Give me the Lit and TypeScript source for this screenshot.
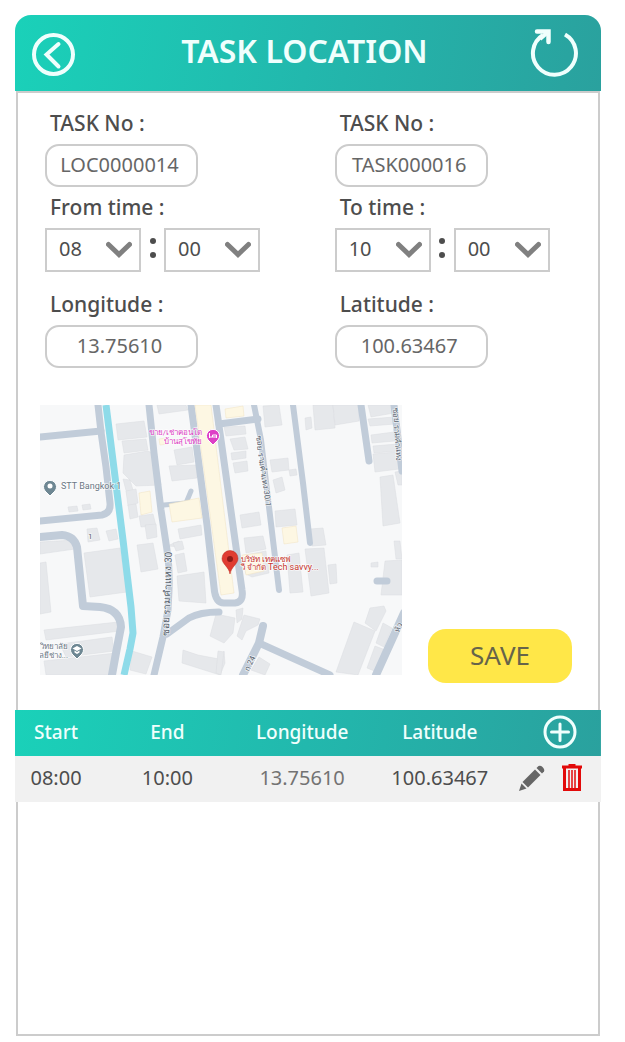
import { LitElement, html, css, svg } from "lit";
import { customElement, state } from "lit/decorators.js";

const ROADS: Array<[string, number]> = [
  ["M58 0 61 27 66 62 70 98Q71 108 62 110L0 116", 7],
  ["M0 32 61 26", 7],
  ["M0 132 22 130Q34 131 37 142L43 201 60 202Q80 204 81 222L76 248 72 270", 8],
  ["M109 0 114 48 121 105 127 145Q130 165 129 185L128 205 123 232 114 270", 7],
  ["M127 229 149 213Q160 207 179 207", 7],
  ["M124 100 146 98 151 86", 5],
  ["M151 0 167 120 174 182Q175 198 184 198L195 198Q204 197 202 185L196 142 182 42 176 0", 7],
  ["M179 19 218 14", 7],
  ["M214 0 221 35 229 102 239 185", 6],
  ["M253 0 263 78 270 138", 6],
  ["M321 0 329 56", 7],
  ["M354 0 362 66", 7],
  ["M223 221 219 238 203 270", 8],
  ["M219 238 250 252 290 270", 7],
  ["M364 208 336 270", 8],
  ["M337 176 347 176", 7],
];

const BLOCKS = [
  "76,19 104,16 107,32 78,35",
  "82,36 106,34 108,45 84,48",
  "84,50 108,46 112,48 118,62 121,80 96,81 83,68",
  "83,74 90,75 95,92 88,93",
  "86,86 96,84 98,98 88,101",
  "88,100 96,99 98,112 90,114",
  "99,111 113,109 116,121 101,122",
  "105,120 116,119 117,132 107,134",
  "28,102 37,101 38,106 29,107",
  "42,100 50,99 51,104 43,105",
  "47,124 57,123 60,135 48,137",
  "66,126 76,124 78,134 69,136",
  "117,0 146,0 148,5 119,9",
  "134,45 152,42 154,57 137,60",
  "129,61 156,60 157,73 132,76",
  "138,124 161,120 162,130 140,134",
  "139,136 143,142 127,141",
  "44,148 80,143 87,187 50,192",
  "0,158 6,157 11,207 0,209",
  "0,137 34,135 35,144 0,149",
  "97,140 113,138 118,164 101,167",
  "135,150 144,148 147,166 138,168",
  "133,138 142,136 144,144 136,146",
  "137,171 164,167 166,198 139,196",
  "4,225 78,217 80,226 6,235",
  "20,239 72,232 74,246 26,252",
  "4,256 76,248 70,270 6,270",
  "92,246 112,252 106,269 90,265",
  "143,245 158,250 179,254 184,246 185,258 180,270 142,258",
  "176,209 195,213 193,228 184,238 170,231",
  "184,22 205,21 206,29 186,31",
  "190,34 205,32 208,44 194,45",
  "191,48 206,46 206,53 192,55",
  "193,58 207,56 208,66 195,68",
  "223,1 239,0 242,20 225,22",
  "200,110 219,107 221,120 202,123",
  "204,133 223,131 226,144 206,148",
  "205,150 226,146 227,157 206,159",
  "205,161 228,158 229,168 212,172 206,169",
  "230,55 248,53 249,65 232,67",
  "249,65 256,64 257,70 250,71",
  "233,75 242,72 245,85 236,88",
  "235,106 255,104 257,120 236,122",
  "265,13 271,12 272,23 266,25",
  "273,0 293,0 295,23 275,25",
  "293,0 319,0 319,16 295,20",
  "270,124 283,123 286,140 272,141",
  "247,150 259,148 263,187 250,188",
  "265,144 284,143 289,188 271,191",
  "288,160 296,159 297,178 290,179",
  "328,0 352,0 354,8 331,12",
  "328,14 354,12 355,19 330,21",
  "331,30 354,27 355,36 332,38",
  "333,41 357,39 358,46 334,48",
  "333,49 357,47 359,64 335,67",
  "340,72 353,70 360,118 343,121",
  "355,67 362,66 362,80 358,80",
  "331,158 338,157 338,162 331,162",
  "345,156 362,155 362,190 341,190",
  "354,136 360,136 362,154 356,154",
  "314,217 335,226 318,270 296,267",
  "330,203 344,201 346,206 336,226 325,218",
  "343,218 352,223 344,242 336,238",
  "335,241 343,244 337,267 327,263",
  "196,205 203,203 202,214 197,218",
  "204,210 220,214 218,220 206,226 202,235 197,231",
  "219,252 230,259 225,270 211,265",
  "178,246 184,247 181,270 176,268",
];

const PARCELS = [
  "99,88 110,86 112,107 101,110",
  "129,99 159,93 162,113 132,117",
  "119,34 126,33 128,39 120,40",
  "155,0 171,0 194,188 181,190",
  "185,4 203,1 204,11 186,13",
  "202,150 222,148 224,166 206,170",
  "242,123 256,121 258,137 244,139",
];

@customElement("location-map")
class LocationMap extends LitElement {
  static styles = css`
    :host { display: block; }
    .map { display: block; width: 100%; height: auto; background: #f7f8f9; }
    .block { fill: #e6e8eb; stroke: #dadde1; stroke-width: 0.5; }
    .parcel { fill: #fdf7e3; stroke: #f1e3c2; stroke-width: 0.5; }
    .road { fill: none; stroke: #c1ccd9; stroke-linejoin: round; stroke-linecap: round; }
    .canal { fill: none; stroke: #8edbe9; stroke-width: 7; stroke-linejoin: round; }
    .name {
      font: 8px Roboto, "Noto Sans", sans-serif;
      fill: #6c7884;
      stroke: #ffffff;
      stroke-width: 1.5;
      stroke-opacity: 0.7;
      paint-order: stroke;
    }
    .large { font-size: 9px; }
    .wide { font-size: 10px; }
    .street { fill: #59636f; }
    .condo { fill: #dc3fc4; }
    .firm { fill: #c7372f; }
    .end { text-anchor: end; }
  `;

  render() {
    return html`
      <svg class="map" viewBox="0 0 362 270" role="img" aria-label="Map of the task location">
        ${BLOCKS.map((p) => svg`<polygon class="block" points=${p} />`)}
        ${ROADS.map(([d, w]) => svg`<path class="road" d=${d} stroke-width=${w} />`)}
        ${PARCELS.map((p) => svg`<polygon class="parcel" points=${p} />`)}
        <path class="canal" d="M66 0 83 135 91 202 93 228 90 244 84 270" />
        <text class="name wide street" transform="translate(129 231) rotate(-88)">ซอย รามคำแหง 30</text>
        <text class="name street" transform="translate(216 31) rotate(82)">ซอย รามคำแหง 30/1</text>
        <text class="name street" transform="translate(353 3) rotate(86)">ซอย รามคำแหง</text>
        <text class="name street" transform="translate(209 267) rotate(-66)">ก 24</text>
        <text class="name street" transform="translate(359 228) rotate(-68)">หัว</text>
        <text class="name street" x="48" y="134">1</text>
        <text class="name large" x="21" y="84">STT Bangkok 1</text>
        <text class="name end" x="28" y="244">วิทยาลัย</text>
        <text class="name end" x="28" y="253">โลยีช่าง...</text>
        <text class="name condo end" x="162" y="30">ขาย/เช่าคอนโด</text>
        <text class="name condo end" x="162" y="39">บ้านสุโขทัย</text>
        <text class="name firm" x="201" y="157">บริษัท เทคแซฟ</text>
        <text class="name firm" x="201" y="165">วี จำกัด <tspan class="large">Tech savvy...</tspan></text>
        <g stroke="#ffffff" stroke-width="1">
          <path fill="#6e8793" d="M10 91 5 86A6.500 6.500 0 1 1 15 86Z" />
          <path fill="#6e8793" d="M37 254 32 249A6.500 6.500 0 1 1 42 249Z" />
          <path fill="#dd3fc6" d="M173 40 168 35A6.500 6.500 0 1 1 178 35Z" />
        </g>
        <circle cx="10" cy="81" r="2.500" fill="#ffffff" />
        <path fill="#ffffff" d="M32.500 243.500 37 241 41.500 243.500 37 246ZM34.500 245.500 37 247 39.500 245.500V247.500L37 249 34.500 247.500Z" />
        <path fill="none" stroke="#ffffff" d="M169.500 28V33M169.500 32H176.500M176.500 33V30H172.500V32" />
        <path fill="#e03c31" stroke="#b8261e" stroke-width="0.500" d="M190 169C189 162 182 159 182 153.500A8 8 0 0 1 198 153.500C198 159 191 162 190 169Z" />
        <circle cx="190" cy="154" r="3" fill="#8f1a17" />
      </svg>
    `;
  }
}

@customElement("time-select")
class TimeSelect extends LitElement {
  static properties = { value: {}, count: { type: Number }, label: {} };
  declare value: string;
  declare count: number;
  declare label: string;

  static styles = css`
    :host { display: grid; width: 96px; }
    .select, .chevron { grid-area: 1 / 1; }
    .select {
      appearance: none;
      box-sizing: border-box;
      width: 100%;
      height: 44px;
      margin: 0;
      padding: 0 12px 3px;
      border: 2px solid #cccccc;
      border-radius: 0;
      background: #ffffff;
      color: #4d4d4d;
      font: 20px "Noto Sans", sans-serif;
    }
    .chevron {
      place-self: center end;
      width: 26px;
      height: 18px;
      margin-right: 9px;
      pointer-events: none;
    }
  `;

  render() {
    const options = Array.from({ length: this.count }, (_, i) => String(i).padStart(2, "0"));
    return html`
      <select class="select" aria-label=${this.label}>
        ${options.map((o) => html`<option ?selected=${o === this.value}>${o}</option>`)}
      </select>
      <svg class="chevron" viewBox="0 0 26 18" aria-hidden="true">
        <path d="M2.500 3.500 13 13.500 23.500 3.500" fill="none" stroke="#808080" stroke-width="5" stroke-linecap="round" />
      </svg>
    `;
  }
}

@customElement("app-root")
class AppRoot extends LitElement {
  @state() private rows = [
    { start: "08:00", end: "10:00", longitude: "13.75610", latitude: "100.63467" },
  ];

  static styles = css`
    :host {
      display: block;
      box-sizing: border-box;
      min-height: 100vh;
      padding: 15px 24px 6px 15px;
      background: #ffffff;
      color: #4d4d4d;
      font-family: "Noto Sans", sans-serif;
    }
    .screen {
      display: flex;
      flex-direction: column;
      min-height: calc(100vh - 21px);
    }
    .bar {
      display: flex;
      align-items: center;
      justify-content: space-between;
      height: 76px;
      box-sizing: border-box;
      padding: 0 22px 0 16px;
      border-radius: 16px 16px 0 0;
      background: linear-gradient(100deg, #1ad1b9, #22b8ad 50%, #2aa19e);
    }
    .title {
      flex: 1;
      margin: 0;
      padding: 0 0 4px 4px;
      color: #f0fffd;
      font-size: 32px;
      line-height: 44px;
      font-weight: 600;
      text-align: center;
    }
    .icon-button {
      display: block;
      padding: 0;
      border: 0;
      background: none;
      cursor: pointer;
    }
    .icon { display: block; }
    .body {
      flex: 1;
      margin: 0 1px;
      border: 2px solid #cccccc;
    }
    .fields {
      display: grid;
      grid-template-columns: 11fr 10fr;
      gap: 6px 0;
      padding: 16px 0 0 27px;
    }
    .field {
      display: grid;
      justify-items: start;
      gap: 7px;
    }
    .spaced { padding-top: 12px; }
    .label {
      padding-left: 5px;
      font-size: 21px;
      line-height: 28px;
      font-weight: 500;
    }
    .input {
      box-sizing: border-box;
      width: 153px;
      height: 43px;
      margin: 0;
      padding: 0 8px 2px 4px;
      border: 2px solid #cccccc;
      border-radius: 14px;
      background: #ffffff;
      color: #666666;
      font: 20px "Noto Sans", sans-serif;
      text-align: center;
    }
    .time {
      display: flex;
      align-items: center;
    }
    .colon {
      display: flex;
      flex-direction: column;
      align-items: center;
      gap: 8px;
      width: 23px;
      padding-bottom: 4px;
    }
    .dot {
      width: 6px;
      height: 6px;
      border-radius: 50%;
      background: #4d4d4d;
    }
    .place {
      display: flex;
      align-items: flex-end;
      gap: 26px;
      padding: 37px 26px 27px 22px;
    }
    .map-slot {
      flex: 1;
      padding-bottom: 8px;
    }
    .save {
      width: 144px;
      height: 54px;
      padding: 0 0 2px;
      border: 0;
      border-radius: 18px;
      background: #ffe748;
      color: #66644a;
      font: 26px "Noto Sans", sans-serif;
      cursor: pointer;
    }
    .table-band { margin: 0 -3px; }
    .table {
      width: 100%;
      border-collapse: collapse;
      table-layout: fixed;
      font-size: 20px;
      line-height: 28px;
      text-align: center;
    }
    .head { background: linear-gradient(100deg, #1ad1b9, #22b8ad 50%, #2aa19e); }
    .row { background: #f1f1f1; }
    .w-start { width: 14%; }
    .w-end { width: 24%; }
    .w-long { width: 22%; }
    .w-lat { width: 25%; }
    .w-actions { width: 15%; }
    .th, .td { height: 44px; padding: 0 0 2px; }
    .th {
      color: #f0fffd;
      font-size: 19px;
      font-weight: 500;
    }
    .soft { color: #737373; }
    .actions {
      display: flex;
      align-items: center;
      justify-content: flex-end;
      gap: 16px;
      padding-right: 18px;
    }
    .actions-head { padding-right: 24px; }
  `;

  private remove(index: number) {
    this.rows = this.rows.filter((_, i) => i !== index);
  }

  render() {
    return html`
      <div class="screen">
        <header class="bar">
          <button class="icon-button" aria-label="Back">
            <svg class="icon" width="45" height="45" viewBox="0 0 45 45" fill="none" stroke="#f0fffd" stroke-linecap="round">
              <circle cx="22.500" cy="23.500" r="19.500" stroke-width="4" />
              <path d="M27.500 13 15.500 23.500 27.500 35.500" stroke-width="4" />
            </svg>
          </button>
          <h1 class="title">TASK LOCATION</h1>
          <button class="icon-button" aria-label="Refresh">
            <svg class="icon" width="50" height="50" viewBox="0 0 50 50" fill="none" stroke="#f0fffd">
              <path d="M36 6.500A21.500 21.500 0 1 1 14 7" stroke-width="4" />
              <path d="M8 3.500H19.500V14" stroke-width="4.500" stroke-linecap="round" />
              <path d="M19 4 11 11" stroke-width="4" />
            </svg>
          </button>
        </header>
        <main class="body">
          <form class="fields" @submit=${(e: Event) => e.preventDefault()}>
            <div class="field">
              <label class="label" for="loc">TASK No :</label>
              <input class="input" id="loc" value="LOC0000014" />
            </div>
            <div class="field">
              <label class="label" for="task">TASK No :</label>
              <input class="input" id="task" value="TASK000016" />
            </div>
            ${this.time("From time", "08")} ${this.time("To time", "10")}
            <div class="field spaced">
              <label class="label" for="lon">Longitude :</label>
              <input class="input" id="lon" value="13.75610" />
            </div>
            <div class="field spaced">
              <label class="label" for="lat">Latitude :</label>
              <input class="input" id="lat" value="100.63467" />
            </div>
          </form>
          <section class="place">
            <location-map class="map-slot"></location-map>
            <button class="save">SAVE</button>
          </section>
          <div class="table-band">
            <table class="table">
              <thead>
                <tr class="head">
                  <th class="th w-start">Start</th>
                  <th class="th w-end">End</th>
                  <th class="th w-long">Longitude</th>
                  <th class="th w-lat">Latitude</th>
                  <th class="th w-actions">
                    <div class="actions actions-head">
                      <button class="icon-button" aria-label="Add">
                        <svg class="icon" width="34" height="34" viewBox="0 0 34 34" fill="none" stroke="#f0fffd" stroke-width="3" stroke-linecap="round">
                          <circle cx="17" cy="17" r="15" />
                          <path d="M17 9V25.500M8.500 17H25.500" />
                        </svg>
                      </button>
                    </div>
                  </th>
                </tr>
              </thead>
              <tbody>
                ${this.rows.map(
                  (r, i) => html`
                    <tr class="row">
                      <td class="td">${r.start}</td>
                      <td class="td">${r.end}</td>
                      <td class="td soft">${r.longitude}</td>
                      <td class="td">${r.latitude}</td>
                      <td class="td">
                        <div class="actions">
                          <button class="icon-button" aria-label="Edit">
                            <svg class="icon" width="27" height="27" viewBox="0 0 27 27" fill="#666666">
                              <path d="M1 26 3.500 18.500 8.500 23.500Z" />
                              <path d="M4.500 17 17 4.500 22.500 10 10 22.500Z" />
                              <path d="M18.500 3 20.500 1Q22.500 0 24.500 2Q27 4.500 26 6.500L24 8.500Z" />
                            </svg>
                          </button>
                          <button class="icon-button" aria-label="Delete" @click=${() => this.remove(i)}>
                            <svg class="icon" width="22" height="28" viewBox="0 0 22 28" fill="none" stroke="#e20a0a">
                              <path d="M1 3H21" stroke-width="3" />
                              <path d="M7.500 1H14.500" stroke-width="2" />
                              <path d="M3.500 4V25.500H18.500V4" stroke-width="3" />
                              <path d="M8 6V24M11 6V24M14 6V24" stroke-width="1.500" />
                            </svg>
                          </button>
                        </div>
                      </td>
                    </tr>
                  `,
                )}
              </tbody>
            </table>
          </div>
        </main>
      </div>
    `;
  }

  private time(name: string, hour: string) {
    return html`
      <div class="field" role="group" aria-label=${name}>
        <span class="label">${name} :</span>
        <div class="time">
          <time-select .value=${hour} .count=${24} .label=${name + " hour"}></time-select>
          <span class="colon" aria-hidden="true"><i class="dot"></i><i class="dot"></i></span>
          <time-select .value=${"00"} .count=${60} .label=${name + " minute"}></time-select>
        </div>
      </div>
    `;
  }
}
